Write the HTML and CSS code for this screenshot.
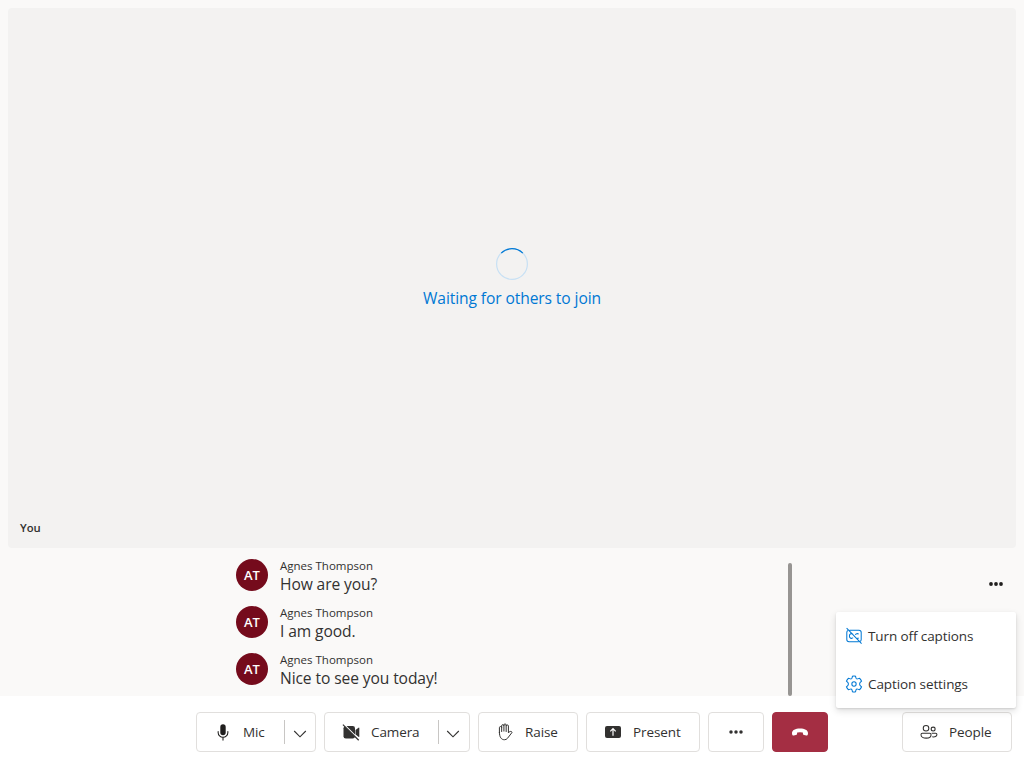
FILE: index.html
```html
<!DOCTYPE html>
<html lang="en">
<head>
<meta charset="utf-8">
<title>Call</title>
<link rel="stylesheet" href="styles.css">
</head>
<body>
<main class="call">
  <section class="stage">
    <div class="waiting">
      <svg class="spinner" viewBox="0 0 32 32"><circle cx="16" cy="16" r="15.4" stroke="#c7e0f4"/><path d="M5.2 5.1A15.4 15.4 0 0 1 26.8 5.1" stroke="#0078d4"/></svg>
      <span class="waiting-text">Waiting for others to join</span>
    </div>
    <span class="you">You</span>
  </section>
  <section class="captions">
    <ul class="caption-list">
      <li class="caption"><span class="avatar">AT</span><div><div class="name">Agnes Thompson</div><div class="line">How are you?</div></div></li>
      <li class="caption"><span class="avatar">AT</span><div><div class="name">Agnes Thompson</div><div class="line">I am good.</div></div></li>
      <li class="caption"><span class="avatar">AT</span><div><div class="name">Agnes Thompson</div><div class="line">Nice to see you today!</div></div></li>
    </ul>
    <div class="scrollbar"></div>
    <svg class="more" viewBox="0 0 16 6"><circle cx="3" cy="3" r="1.9"/><circle cx="8" cy="3" r="1.9"/><circle cx="13" cy="3" r="1.9"/></svg>
  </section>
  <div class="menu">
    <div class="menu-item">
      <svg class="icon blue" viewBox="0 0 20 20"><path d="M5 3.500h10.500a2.500 2.500 0 0 1 2.500 2.500v8c0 1-.5 1.800-1.300 2.200M3.200 3.900c-.7.400-1.200 1.200-1.200 2.100v8a2.500 2.500 0 0 0 2.500 2.500h10.800M1.800 1.300l16.600 17.200M8.800 8.200C7.300 6.500 4.900 7.600 4.900 10s2.400 3.400 4.100 1.900M15.200 7.900c-1.400-1-3.100-.5-3.700.9M15.200 12.100c-.5.400-1.100.5-1.700.4"/></svg>
      <span>Turn off captions</span>
    </div>
    <div class="menu-item">
      <svg class="icon blue" viewBox="0 0 20 20"><circle cx="10" cy="10" r="2.400"/><path d="M8.300 1.300Q10 .8 11.700 1.300L12.200 3.500Q12.700 4.700 14 4.300L16.100 3.600Q17.700 4.900 18.400 6.900L16.700 8.400Q15.700 10 16.700 11.600L18.400 13.100Q17.700 15.100 16.100 16.400L14 15.700Q12.700 15.300 12.200 16.500L11.700 18.700Q10 19.200 8.300 18.700L7.800 16.500Q7.300 15.300 6 15.700L3.900 16.400Q2.300 15.100 1.600 13.100L3.300 11.600Q4.300 10 3.300 8.400L1.600 6.900Q2.300 4.900 3.900 3.600L6 4.300Q7.300 4.700 7.800 3.500Z"/></svg>
      <span>Caption settings</span>
    </div>
  </div>
</main>
<footer class="toolbar">
  <div class="controls">
    <div class="btn mic">
      <div class="split-main"><svg class="icon" viewBox="0 0 20 20"><rect x="7" y="1.500" width="6" height="12" rx="3" fill="#201f1e"/><path d="M4.600 9.500v1a5.400 5.400 0 0 0 10.800 0v-1M10 16v3" fill="none" stroke="#201f1e" stroke-width="1.200" stroke-linecap="round"/></svg><span>Mic</span></div>
      <div class="split-arrow"><svg viewBox="0 0 14 8"><path d="M1.200 1 7 6.800 12.800 1"/></svg></div>
    </div>
    <div class="btn camera">
      <div class="split-main"><svg class="icon" viewBox="0 0 18 18"><rect x="1.500" y="3" width="11.500" height="12.500" rx="2.300" fill="#323130"/><path d="m13.500 7 3-2.300q.8-.5.8.4v8.400q0 .8-.8.300l-3-2.300z" fill="#323130"/><path d="m1.500.9 16 16" stroke="#fff" stroke-width="1.400"/><path d="m.9 1.600 15.800 15.600" stroke="#323130" stroke-width="1.200"/></svg><span>Camera</span></div>
      <div class="split-arrow"><svg viewBox="0 0 14 8"><path d="M1.200 1 7 6.800 12.800 1"/></svg></div>
    </div>
    <div class="btn raise"><svg class="icon" viewBox="0 0 20 20" fill="none" stroke="#323130" stroke-width="1.100" stroke-linejoin="round" stroke-linecap="round"><path d="M3.800 10.500V5.200a1.250 1.250 0 0 1 2.500 0V3.100a1.250 1.250 0 0 1 2.500 0V2.300a1.250 1.250 0 0 1 2.500 0v1.100a1.250 1.250 0 0 1 2.500 0v7.500c1-1.400 2.200-2 3.600-1.200.5.300.5.800.1 1.200l-4.800 6.200q-1.200 1.500-3.400 1.500c-3.300 0-5.500-2.800-5.500-8.100ZM6.300 5.200V9.500M8.800 3.100V9M11.300 3.400V9.500"/></svg><span>Raise</span></div>
    <div class="btn present"><svg class="icon" viewBox="0 0 18 18"><rect x="1" y="3" width="16" height="12" rx="2" fill="#323130"/><path d="M9 12.800V5.800M6.300 8.300 9 5.600l2.700 2.700" fill="none" stroke="#fff" stroke-width="1.200"/></svg><span>Present</span></div>
    <div class="btn dots"><svg viewBox="0 0 16 6"><circle cx="3" cy="3" r="1.750"/><circle cx="8" cy="3" r="1.750"/><circle cx="13" cy="3" r="1.750"/></svg></div>
    <div class="btn hangup"><svg viewBox="0 0 18 8"><path d="M1 5.200C1 2.300 4.300.6 9 .6s8 1.700 8 4.600c0 1.500-.6 2.500-1.800 2.300l-2.100-.4q-1-.2-1.100-1.200L11.800 4.600Q9 3.700 6.200 4.600L6 5.900q-.1 1-1.100 1.200l-2.100.4C1.600 7.700 1 6.700 1 5.200Z" fill="#fff"/></svg></div>
  </div>
  <div class="btn people"><svg class="icon" viewBox="0 0 20 20" fill="none" stroke="#323130" stroke-width="1.150"><circle cx="6.700" cy="5.900" r="3.100"/><circle cx="14.600" cy="6.800" r="2.200"/><path d="M2.600 11.500h8.200c.9 0 1.500.6 1.500 1.500 0 2.300-2.400 3.800-5.400 3.800s-5.800-1.500-5.800-3.800c0-.9.600-1.500 1.500-1.500ZM13 11.500h4.400c.8 0 1.400.6 1.400 1.400 0 1.900-2.100 3-5.200 2.500"/></svg><span>People</span></div>
</footer>
</body>
</html>
```

FILE: styles.css
```css
* { box-sizing: border-box; }
body {
  margin: 0;
  width: 1024px;
  height: 768px;
  overflow: hidden;
  display: flex;
  flex-direction: column;
  background: #fff;
  color: #323130;
  font-family: "Open Sans", "Noto Sans", sans-serif;
  font-size: 13.5px;
  letter-spacing: -0.1px;
}
svg { display: block; flex: none; }
.call {
  position: relative;
  height: 696px;
  padding: 8px 8px 0;
  background: #faf9f8;
}
.stage {
  height: 540px;
  border-radius: 4px;
  background: #f3f2f1;
  display: flex;
  flex-direction: column;
  justify-content: space-between;
}
.waiting {
  padding-top: 240px;
  display: flex;
  flex-direction: column;
  align-items: center;
  gap: 7px;
}
.spinner { width: 32px; height: 32px; fill: none; stroke-width: 1.2; }
.waiting-text {
  color: #0078d4;
  font-size: 15.6px;
  line-height: 22px;
  letter-spacing: -0.1px;
  white-space: nowrap;
}
.you { padding: 0 12px 12px; font-size: 11.3px; line-height: 16px; font-weight: 600; letter-spacing: 0; }
.captions {
  height: 148px;
  display: grid;
  grid-template-columns: 552px 4px 1fr;
  padding-left: 228px;
}
.caption-list { margin: 0; padding: 9px 0 0; list-style: none; }
.caption { height: 47px; display: flex; gap: 12px; }
.avatar {
  width: 32px;
  height: 32px;
  margin-top: 2px;
  border-radius: 50%;
  background: #750b1c;
  color: #fff;
  font-size: 13px;
  font-weight: 600;
  line-height: 32px;
  text-align: center;
  letter-spacing: 0;
}
.name { font-size: 11.5px; line-height: 16px; margin-top: 1px; white-space: nowrap; letter-spacing: 0; }
.line { font-size: 15.6px; line-height: 21px; white-space: nowrap; letter-spacing: -0.1px; }
.scrollbar { margin-top: 15px; height: 133px; width: 4px; border-radius: 2px; background: #979593; }
.more { width: 16px; height: 6px; margin: 33px 12px 0 auto; fill: #201f1e; }
.menu {
  position: absolute;
  z-index: 2;
  top: 612px;
  right: 8px;
  width: 180px;
  height: 96px;
  border-radius: 2px;
  background: #fff;
  box-shadow: 0 3px 7px rgba(0, 0, 0, .13), 0 1px 2px rgba(0, 0, 0, .11);
}
.menu-item { height: 48px; padding-left: 9px; display: flex; align-items: center; gap: 5px; white-space: nowrap; }
.menu-item .icon { width: 18px; height: 18px; }
.blue { fill: none; stroke: #0078d4; stroke-width: 1.15; }
.toolbar { position: relative; height: 72px; padding: 16px 12px 0 196px; display: flex; justify-content: space-between; }
.controls { display: flex; gap: 8px; }
.btn {
  height: 40px;
  border: 1px solid #e1dfdd;
  border-radius: 4px;
  background: #fff;
  display: flex;
  align-items: center;
  white-space: nowrap;
}
.icon { width: 18px; height: 18px; }
.split-main { flex: 1; display: flex; align-items: center; }
.split-arrow { width: 31px; height: 24px; border-left: 1px solid #c8c6c4; display: flex; align-items: center; justify-content: center; padding-top: 4px; }
.split-arrow svg { width: 14px; height: 8px; fill: none; stroke: #323130; stroke-width: 1.1; }
.mic { width: 120px; }
.mic .split-main { padding-left: 17px; gap: 11px; }
.camera { width: 146px; }
.camera .split-main { padding-left: 17px; gap: 11px; }
.camera .split-arrow svg { margin-right: 2px; }
.raise { width: 100px; padding-left: 17px; gap: 11px; }
.present { width: 114px; padding-left: 17px; gap: 11px; }
.dots { width: 56px; justify-content: center; }
.dots svg { width: 16px; height: 6px; fill: #323130; }
.hangup { width: 56px; justify-content: center; background: #a42e43; border-color: #a42e43; }
.hangup svg { width: 18px; height: 8px; }
.people { width: 110px; padding-left: 17px; gap: 11px; }
```
